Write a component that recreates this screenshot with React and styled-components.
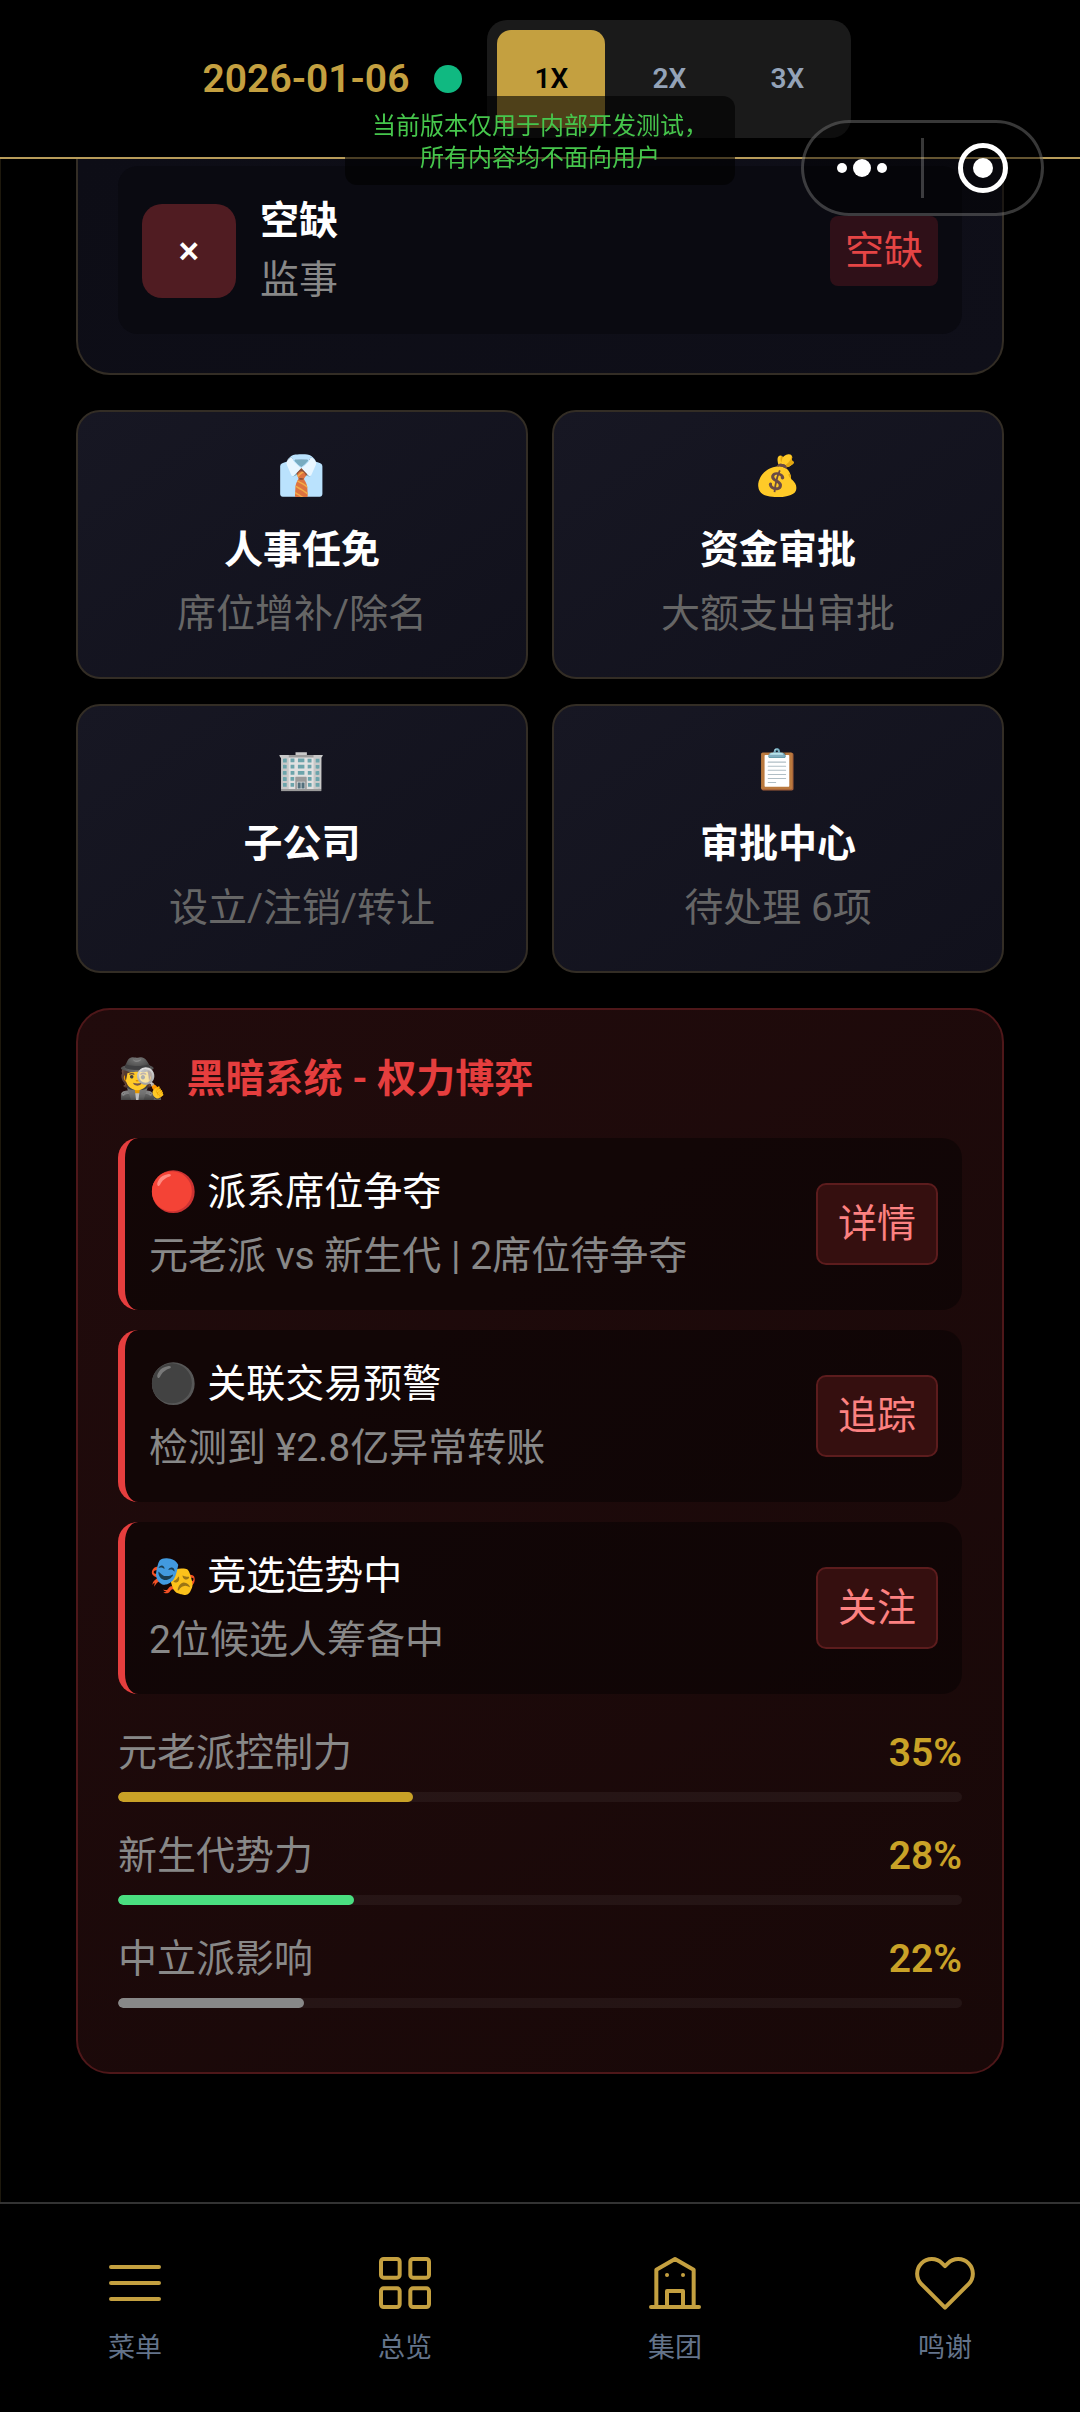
import { useState } from "react"
import styled, { createGlobalStyle } from "styled-components"

const GlobalStyle = createGlobalStyle`
  * {
    box-sizing: border-box;
  }
  body {
    margin: 0;
    background-color: #000;
    color: #fff;
    font-family: Roboto, "Noto Sans CJK SC", "Noto Color Emoji", sans-serif;
    font-size: 39px;
    line-height: 58px;
  }
  h2,
  h3,
  p {
    margin: 0;
    font-size: inherit;
  }
  button {
    font: inherit;
    color: inherit;
    cursor: pointer;
  }
`

const Page = styled.div`
  display: flex;
  flex-direction: column;
  min-height: 100vh;
`

const Header = styled.header`
  position: sticky;
  top: 0;
  z-index: 10;
  display: flex;
  align-items: center;
  justify-content: center;
  gap: 25px;
  padding: 20px 26px 19px 0;
  background-color: #000;
  border-bottom: 2px solid #b89c5a;
`

const GameDate = styled.time`
  color: #c4a040;
  font-weight: 600;
`

const StatusDot = styled.span`
  width: 28px;
  height: 28px;
  border-radius: 50%;
  background-color: #10b981;
`

const SpeedGroup = styled.div`
  display: flex;
  gap: 10px;
  padding: 10px;
  border-radius: 20px;
  background-color: #1a1a1a;
`

const SpeedButton = styled.button`
  width: 108px;
  height: 98px;
  padding: 0;
  border: none;
  border-radius: 14px;
  font-size: 28px;
  font-weight: 600;
  color: ${(props) => (props.$active ? "#000" : "#94a3b8")};
  background-color: ${(props) => (props.$active ? "#c4a040" : "transparent")};
`

/* floats over the header, never takes clicks */
const Notice = styled.p`
  position: fixed;
  top: 96px;
  left: 50%;
  z-index: 20;
  padding: 14px 27px 11px;
  border-radius: 12px;
  background-color: rgba(0, 0, 0, 0.6);
  color: #46c64c;
  font-size: 24px;
  line-height: 32px;
  text-align: center;
  white-space: nowrap;
  transform: translateX(-50%);
  pointer-events: none;
`

const Capsule = styled.div`
  position: fixed;
  top: 120px;
  right: 36px;
  z-index: 30;
  display: flex;
  align-items: center;
  width: 243px;
  height: 96px;
  border: 3px solid rgba(255, 255, 255, 0.22);
  border-radius: 48px;
  background-color: rgba(0, 0, 0, 0.45);
`

const CapsuleButton = styled.button`
  display: flex;
  flex: 1;
  align-items: center;
  justify-content: center;
  height: 60px;
  padding: 0;
  border: none;
  background: none;

  & + & {
    border-left: 3px solid rgba(255, 255, 255, 0.22);
  }
`

const Main = styled.main`
  display: flex;
  flex: 1;
  flex-direction: column;
  gap: 35px;
  padding: 0 76px 35px 75px;
  border-left: 1px solid #1d180c;
`

const SeatPanel = styled.section`
  padding: 7px 40px 39px;
  border: 2px solid #332d25;
  border-top: none;
  border-radius: 0 0 34px 34px;
  background: linear-gradient(145deg, #0d0d16, #0f0f19);
`

const Seat = styled.div`
  display: flex;
  align-items: center;
  gap: 24px;
  padding: 26px 24px 25px;
  border-radius: 20px;
  background-color: #0a0a11;
`

const Avatar = styled.span`
  display: flex;
  align-items: center;
  justify-content: center;
  width: 94px;
  height: 94px;
  border-radius: 20px;
  background-color: #501c22;
  font-size: 39px;
  font-weight: 500;
`

const SeatText = styled.div`
  display: flex;
  flex: 1;
  flex-direction: column;
  gap: 1px;
`

const Muted = styled.p`
  color: ${(props) => (props.$dark ? "#666" : "#888")};
`

const VacantBadge = styled.span`
  padding: 6px 15px;
  border-radius: 8px;
  background-color: #2f1018;
  color: #e54545;
`

const ActionGrid = styled.div`
  display: grid;
  grid-template-columns: 1fr 1fr;
  gap: 25px 24px;
`

const ActionCard = styled.button`
  display: flex;
  flex-direction: column;
  align-items: center;
  padding: 35px 24px 34px;
  border: 2px solid #332d25;
  border-radius: 24px;
  background: linear-gradient(145deg, #171723, #11111c);

  h3 {
    margin: 16px 0 6px;
  }
`

const DarkPanel = styled.section`
  padding: 40px 40px 64px;
  border: 2px solid #4e1719;
  border-radius: 34px;
  background: linear-gradient(145deg, #210b0c, #180808);
`

const DarkTitle = styled.h2`
  display: flex;
  gap: 20px;
  margin-bottom: 30px;
  color: #e53e3e;
`

const EventList = styled.ul`
  display: flex;
  flex-direction: column;
  gap: 20px;
  margin: 0 0 30px;
  padding: 0;
  list-style: none;
`

const EventItem = styled.li`
  display: flex;
  align-items: center;
  justify-content: space-between;
  padding: 25px 24px;
  border-left: 7px solid #e53e3e;
  border-radius: 20px;
  background-color: rgba(0, 0, 0, 0.4);

  h3 {
    margin-bottom: 6px;
    font-weight: 400;
  }
`

const EventButton = styled.button`
  padding: 10px 20px;
  border: 2px solid #5c1c1d;
  border-radius: 10px;
  background-color: #350f0f;
  color: #fc8181;
`

const PowerList = styled.div`
  display: flex;
  flex-direction: column;
  gap: 25px;
`

const PowerHead = styled.div`
  display: flex;
  justify-content: space-between;
  margin-bottom: 10px;
  color: #888;

  strong {
    color: #c9a227;
    font-weight: 600;
  }
`

const Track = styled.div`
  height: 10px;
  overflow: hidden;
  border-radius: 5px;
  background-color: rgba(255, 255, 255, 0.05);
`

const Fill = styled.div`
  height: 100%;
  border-radius: 5px;
  background-color: ${(props) => props.$color};
`

const TabBar = styled.nav`
  position: sticky;
  bottom: 0;
  display: grid;
  grid-template-columns: repeat(4, 1fr);
  padding: 47px 0 44px;
  border-top: 2px solid #333;
  background-color: #000;
`

const Tab = styled.a`
  display: flex;
  flex-direction: column;
  align-items: center;
  gap: 13px;
  color: #64748b;
  font-size: 27px;
  line-height: 40px;
  text-decoration: none;

  svg {
    width: 64px;
    height: 64px;
    fill: none;
    stroke: #c4a040;
    stroke-width: 1.5;
    stroke-linecap: round;
    stroke-linejoin: round;
  }
`

const actions = [
  { icon: "👔", title: "人事任免", note: "席位增补/除名" },
  { icon: "💰", title: "资金审批", note: "大额支出审批" },
  { icon: "🏢", title: "子公司", note: "设立/注销/转让" },
  { icon: "📋", title: "审批中心", note: "待处理 6项" },
]

const events = [
  { title: "🔴 派系席位争夺", note: "元老派 vs 新生代 | 2席位待争夺", action: "详情" },
  { title: "⚫ 关联交易预警", note: "检测到 ¥2.8亿异常转账", action: "追踪" },
  { title: "🎭 竞选造势中", note: "2位候选人筹备中", action: "关注" },
]

const powers = [
  { label: "元老派控制力", value: 35, color: "#c9a227" },
  { label: "新生代势力", value: 28, color: "#4ade80" },
  { label: "中立派影响", value: 22, color: "#888" },
]

const tabs = [
  { id: "menu", label: "菜单", icon: <path d="M3 6h18M3 12h18M3 18h18" /> },
  {
    id: "overview",
    label: "总览",
    icon: (
      <>
        <rect x="3" y="3" width="7" height="7" rx="1" />
        <rect x="14" y="3" width="7" height="7" rx="1" />
        <rect x="3" y="14" width="7" height="7" rx="1" />
        <rect x="14" y="14" width="7" height="7" rx="1" />
      </>
    ),
  },
  {
    id: "group",
    label: "集团",
    icon: <path d="M3 21h18M5 21V7l7-4 7 4v14M9 21v-6h6v6M9 9h.01M15 9h.01" />,
  },
  {
    id: "thanks",
    label: "鸣谢",
    icon: (
      <path d="M20.84 4.61a5.5 5.5 0 0 0-7.78 0L12 5.67l-1.06-1.06a5.5 5.5 0 0 0-7.78 7.78l1.06 1.06L12 21.23l7.78-7.78 1.06-1.06a5.5 5.5 0 0 0 0-7.78z" />
    ),
  },
]

const App = () => {
  const [speed, setSpeed] = useState(1)

  return (
    <Page>
      <GlobalStyle />
      <Header>
        <GameDate dateTime="2026-01-06">2026-01-06</GameDate>
        <StatusDot />
        <SpeedGroup>
          {[1, 2, 3].map((n) => (
            <SpeedButton key={n} $active={speed === n} onClick={() => setSpeed(n)}>
              {n}X
            </SpeedButton>
          ))}
        </SpeedGroup>
      </Header>

      <Notice>
        当前版本仅用于内部开发测试，
        <br />
        所有内容均不面向用户
      </Notice>

      <Capsule>
        <CapsuleButton aria-label="更多">
          <svg width="52" height="20" viewBox="0 0 52 20" fill="#fff">
            <circle cx="5" cy="10" r="5" />
            <circle cx="25" cy="10" r="9" />
            <circle cx="45" cy="10" r="5" />
          </svg>
        </CapsuleButton>
        <CapsuleButton aria-label="关闭">
          <svg width="50" height="50" viewBox="0 0 50 50">
            <circle cx="25" cy="25" r="22.5" fill="none" stroke="#fff" strokeWidth="5" />
            <circle cx="25" cy="25" r="10" fill="#fff" />
          </svg>
        </CapsuleButton>
      </Capsule>

      <Main>
        <SeatPanel>
          <Seat>
            <Avatar>×</Avatar>
            <SeatText>
              <h3>空缺</h3>
              <Muted>监事</Muted>
            </SeatText>
            <VacantBadge>空缺</VacantBadge>
          </Seat>
        </SeatPanel>

        <ActionGrid>
          {actions.map((item) => (
            <ActionCard key={item.title}>
              <span>{item.icon}</span>
              <h3>{item.title}</h3>
              <Muted $dark>{item.note}</Muted>
            </ActionCard>
          ))}
        </ActionGrid>

        <DarkPanel>
          <DarkTitle>
            <span>🕵️</span>
            黑暗系统 - 权力博弈
          </DarkTitle>
          <EventList>
            {events.map((item) => (
              <EventItem key={item.action}>
                <div>
                  <h3>{item.title}</h3>
                  <Muted>{item.note}</Muted>
                </div>
                <EventButton>{item.action}</EventButton>
              </EventItem>
            ))}
          </EventList>
          <PowerList>
            {powers.map((item) => (
              <div key={item.label}>
                <PowerHead>
                  <span>{item.label}</span>
                  <strong>{item.value}%</strong>
                </PowerHead>
                <Track>
                  <Fill $color={item.color} style={{ width: `${item.value}%` }} />
                </Track>
              </div>
            ))}
          </PowerList>
        </DarkPanel>
      </Main>

      <TabBar>
        {tabs.map((tab) => (
          <Tab key={tab.id} href={`#${tab.id}`}>
            <svg viewBox="0 0 24 24">{tab.icon}</svg>
            {tab.label}
          </Tab>
        ))}
      </TabBar>
    </Page>
  )
}

export default App
